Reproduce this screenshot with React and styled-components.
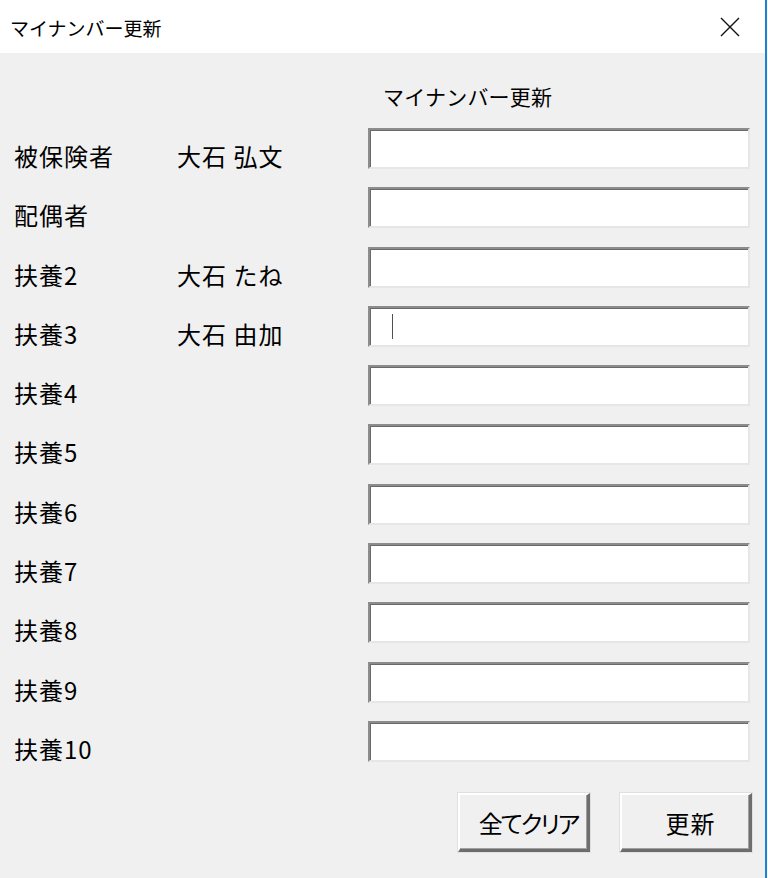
import React from 'react'
import styled, { createGlobalStyle } from 'styled-components'

const GlobalStyle = createGlobalStyle`
    html, body {
        margin: 0;
        padding: 0;
        background: #ffffff;
    }
    body {
        font-family: "Noto Sans CJK JP", "Noto Sans", sans-serif;
        color: #000000;
    }
`

const Screen = styled.div`
    display: flex;
    width: 768px;
    height: 878px;
    overflow: hidden;
`

const Dialog = styled.div`
    flex: 0 0 765px;
    display: flex;
    flex-direction: column;
    background: #f0f0f0;
`

const WindowEdge = styled.div`
    flex: 0 0 2px;
    background: #1883d7;
`

const TitleBar = styled.div`
    height: 53px;
    flex: 0 0 53px;
    display: flex;
    align-items: center;
    justify-content: space-between;
    background: #ffffff;
    padding-left: 10px;
`

const Title = styled.div`
    font-size: 19px;
    line-height: 24px;
    margin-top: 2px;
`

const CloseButton = styled.div`
    width: 68px;
    height: 53px;
    display: flex;
    align-items: center;
    justify-content: center;
    padding-right: 2px;
    box-sizing: border-box;
`

const Body = styled.div`
    flex: 1;
    display: flex;
    flex-direction: column;
    padding: 0 15px 0 14px;
`

const HeaderRow = styled.div`
    height: 75px;
    box-sizing: border-box;
    padding: 33px 0 0 369px;
    font-size: 21px;
    line-height: 21px;
    letter-spacing: 0.2px;
`

const Row = styled.div`
    display: grid;
    grid-template-columns: 163px 191px 382px;
    height: 59.3px;
`

const Label = styled.div`
    font-size: 24px;
    line-height: 24px;
    padding-top: 16px;
    letter-spacing: 1px;
    white-space: pre;
`

const Textbox = styled.div`
    height: 41px;
    box-sizing: border-box;
    display: flex;
    align-items: center;
    padding-left: 22px;
    background: #ffffff;
    border-style: solid;
    border-width: 2px;
    border-color: #8c8c8c #e6e6e6 #e6e6e6 #8c8c8c;
    box-shadow: inset 1px 1px 0 #6a6a6a;
`

const Caret = styled.span`
    width: 1px;
    height: 25px;
    background: #505050;
`

const ButtonRow = styled.div`
    display: flex;
    justify-content: flex-end;
    gap: 30px;
    margin-top: 13px;
    margin-right: -2px;
`

const Button = styled.div`
    width: 132px;
    height: 59px;
    box-sizing: border-box;
    display: flex;
    align-items: center;
    justify-content: center;
    font-size: 24px;
    font-feature-settings: "palt";
    letter-spacing: ${p => p.$tight ? '-2px' : '1px'};
    padding-left: 10px;
    background: #f0f0f0;
    border-style: solid;
    border-width: 2px 3px 3px 2px;
    border-color: #ffffff #6d6d6d #6d6d6d #ffffff;
    box-shadow: 0 0 0 1px #e0e0e0, inset -1px -1px 0 #a0a0a0;
`

const rows = [
    { label: '被保険者', name: '大石 弘文' },
    { label: '配偶者', name: '' },
    { label: '扶養2', name: '大石 たね' },
    { label: '扶養3', name: '大石 由加', focused: true },
    { label: '扶養4', name: '' },
    { label: '扶養5', name: '' },
    { label: '扶養6', name: '' },
    { label: '扶養7', name: '' },
    { label: '扶養8', name: '' },
    { label: '扶養9', name: '' },
    { label: '扶養10', name: '' },
]

const CloseIcon = () => (
    <svg width="22" height="22" viewBox="0 0 22 22">
        <path d="M2 2 L20 20 M20 2 L2 20" stroke="#111" strokeWidth="1.4" fill="none" />
    </svg>
)

export default function App() {
    return (
        <Screen>
            <GlobalStyle />
            <Dialog>
                <TitleBar>
                    <Title>マイナンバー更新</Title>
                    <CloseButton>
                        <CloseIcon />
                    </CloseButton>
                </TitleBar>
                <Body>
                    <HeaderRow>マイナンバー更新</HeaderRow>
                    {rows.map(r => (
                        <Row key={r.label}>
                            <Label>{r.label}</Label>
                            <Label>{r.name}</Label>
                            <Textbox>{r.focused && <Caret />}</Textbox>
                        </Row>
                    ))}
                    <ButtonRow>
                        <Button $tight>全てクリア</Button>
                        <Button>更新</Button>
                    </ButtonRow>
                </Body>
            </Dialog>
            <WindowEdge />
        </Screen>
    )
}
